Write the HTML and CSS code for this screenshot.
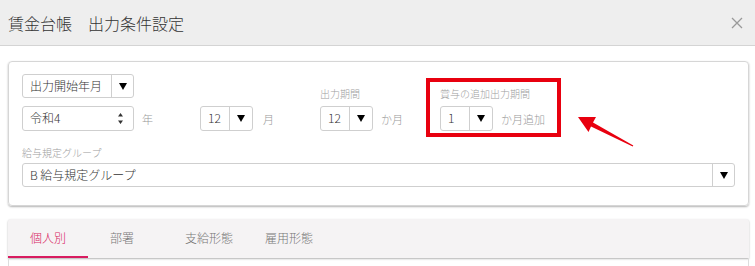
FILE: index.html
```html
<!DOCTYPE html>
<html lang="ja">
<head>
    <meta charset="UTF-8">
    <title>賃金台帳 出力条件設定</title>
    <link rel="stylesheet" href="styles.css">
</head>
<body>
    <div class="header">
        <h1 class="title">賃金台帳　出力条件設定</h1>
        <svg class="close" width="12" height="12" viewBox="0 0 12 12">
            <path d="M1 1L11 11M11 1L1 11" stroke="#999" stroke-width="1.3" fill="none"/>
        </svg>
    </div>

    <div class="main">
        <div class="card">
            <div class="conds">
                <div class="col-start">
                    <div class="sel sel-wide">
                        <span class="sel-val">出力開始年月</span>
                        <span class="sel-arrow"><svg width="8" height="7" viewBox="0 0 8 7"><path d="M0 0H8L4 7Z"/></svg></span>
                    </div>
                    <div class="line">
                        <div class="spin">
                            <span class="sel-val">令和4</span>
                            <span class="spin-btn">
                                <svg width="5" height="11" viewBox="0 0 5 11"><path d="M0 3.5L2.5 0L5 3.5Z M0 7.5L2.5 11L5 7.5Z" fill="#333"/></svg>
                            </span>
                        </div>
                        <span class="unit">年</span>
                    </div>
                </div>

                <div class="col-month">
                    <div class="line">
                        <div class="sel sel-small">
                            <span class="sel-val">12</span>
                            <span class="sel-arrow"><svg width="8" height="7" viewBox="0 0 8 7"><path d="M0 0H8L4 7Z"/></svg></span>
                        </div>
                        <span class="unit unit-month">月</span>
                    </div>
                </div>

                <div class="col-period">
                    <div class="label">出力期間</div>
                    <div class="line">
                        <div class="sel sel-small">
                            <span class="sel-val">12</span>
                            <span class="sel-arrow"><svg width="8" height="7" viewBox="0 0 8 7"><path d="M0 0H8L4 7Z"/></svg></span>
                        </div>
                        <span class="unit">か月</span>
                    </div>
                </div>

                <div class="col-bonus">
                    <div class="label">賞与の追加出力期間</div>
                    <div class="line">
                        <div class="sel sel-small">
                            <span class="sel-val">1</span>
                            <span class="sel-arrow"><svg width="8" height="7" viewBox="0 0 8 7"><path d="M0 0H8L4 7Z"/></svg></span>
                        </div>
                        <span class="unit">か月追加</span>
                    </div>
                </div>
            </div>

            <div class="label label-group">給与規定グループ</div>
            <div class="sel sel-full">
                <span class="sel-val">B 給与規定グループ</span>
                <span class="sel-arrow"><svg width="8" height="7" viewBox="0 0 8 7"><path d="M0 0H8L4 7Z"/></svg></span>
            </div>
        </div>

        <div class="tabs">
            <div class="tab active">個人別</div>
            <div class="tab">部署</div>
            <div class="tab tab-pay">支給形態</div>
            <div class="tab">雇用形態</div>
        </div>
        <div class="tab-body"></div>
    </div>

    <!-- 注釈の矢印 -->
    <svg class="pointer" width="70" height="45" viewBox="0 0 70 45">
        <polygon points="8,9 26,9 23,14.5 63.3,37.4 62.7,38.6 21,18.5 18.5,24" fill="#e8000f"/>
    </svg>
</body>
</html>
```

FILE: styles.css
```css
body {
    margin: 0;
    position: relative;
    font-family: "Noto Sans CJK JP", "Noto Sans", sans-serif;
    font-weight: 300;
    color: #333;
    background: #fff;
}

.header {
    height: 45px;
    background-color: #eeeeee;
    border-bottom: 1px solid #d4d4d4;
    display: flex;
    align-items: center;
    justify-content: space-between;
    padding: 0 12px 0 8px;
}

.title {
    margin: 0;
    font-size: 16px;
    font-weight: 300;
    color: #333;
}

.close {
    margin-top: 1px;
}

.main {
    padding: 15px 6px 0 8px;
}

.card {
    border: 1px solid #d6d6d6;
    border-radius: 4px;
    box-shadow: 0 1px 2px rgba(0, 0, 0, 0.3);
    padding: 12px 13px 18px 13px;
}

.conds {
    display: flex;
    align-items: flex-start;
}

.line {
    display: flex;
    align-items: center;
}

.sel, .spin {
    display: flex;
    box-sizing: border-box;
    border: 1px solid #cfcfcf;
    border-radius: 3px;
    background: #fff;
}

.sel {
    height: 24px;
}

.spin {
    height: 25px;
    width: 112px;
}

.sel-val {
    flex: 1;
    font-size: 12px;
    line-height: 22px;
    padding-left: 7px;
    color: #333;
    white-space: nowrap;
}

.sel-arrow {
    width: 21px;
    border-left: 1px solid #cfcfcf;
    display: flex;
    align-items: center;
    justify-content: center;
}

.spin-btn {
    width: 15px;
    display: flex;
    align-items: center;
    justify-content: flex-start;
}

.sel-wide {
    width: 112px;
    margin-bottom: 8px;
}

.sel-small {
    width: 53px;
    height: 25px;
}

.sel-small .sel-arrow {
    width: 22px;
}

.sel-full {
    width: 100%;
}

.unit {
    font-size: 11px;
    color: #999;
    margin-left: 8px;
}

.unit-month {
    margin-left: 10px;
}

.label {
    font-size: 10px;
    line-height: 14px;
    color: #a0a0a0;
    margin-bottom: 5px;
}

.col-month {
    margin-left: 47px;
    margin-top: 32px;
}

.col-period {
    margin-left: 46px;
    margin-top: 13px;
}

.col-bonus {
    margin-left: 23px;
    margin-top: 4px;
    border: 4px solid #e8000f;
    padding: 5px 12px 2px 10px;
}

.label-group {
    margin-top: 9px;
    margin-bottom: 3px;
    font-size: 10px;
}

.tabs {
    margin-top: 13px;
    display: flex;
    background: #f5f3f4;
    height: 39px;
    box-shadow: 0 1px 2px rgba(0, 0, 0, 0.3);
    border-radius: 3px 3px 0 0;
}

.tab {
    padding: 0 22px;
    font-size: 12px;
    line-height: 37px;
    color: #777;
    border-bottom: 2px solid transparent;
}

.tab-pay {
    padding: 0 10px 0 29px;
}

.tab.active {
    color: #d81b60;
    border-bottom-color: #d81b60;
}

.tab-body {
    height: 20px;
    border: 1px solid #ddd;
    border-top: none;
}

.pointer {
    position: absolute;
    left: 570px;
    top: 108px;
}
```
